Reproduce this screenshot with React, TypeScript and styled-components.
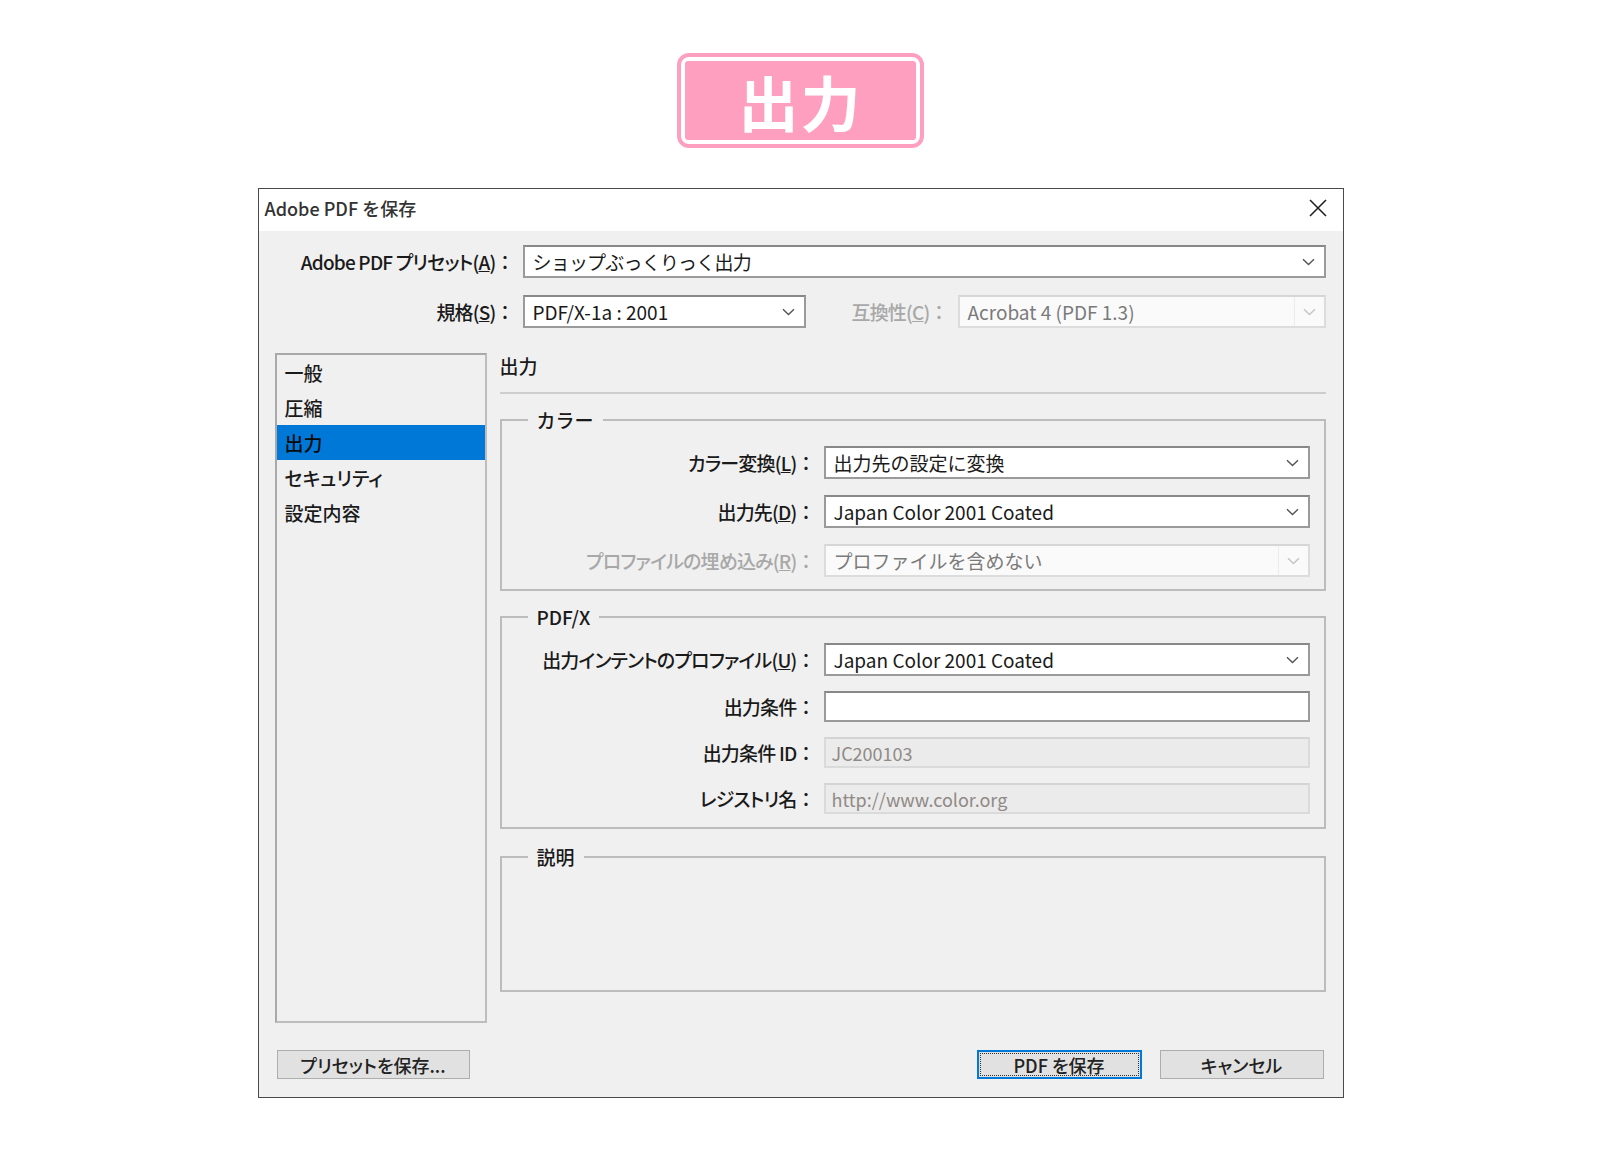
import React from "react";
import styled, { createGlobalStyle } from "styled-components";

const GlobalStyle = createGlobalStyle`
  html, body {
    margin: 0;
    padding: 0;
    background: #fff;
  }
  body {
    font-family: "Noto Sans CJK JP", "Noto Sans", sans-serif;
    font-weight: 500;
    color: #1a1a1a;
  }
  * {
    box-sizing: border-box;
  }
`;

const Page = styled.div`
  width: 1601px;
  min-height: 1150px;
  display: flex;
  flex-direction: column;
  align-items: center;
  padding-top: 53px;
`;

const Badge = styled.div`
  width: 247px;
  height: 95px;
  padding: 4px;
  display: flex;
  background: #fff;
  border: 4px solid #ff9fbf;
  border-radius: 12px;
`;

const BadgeInner = styled.div`
  flex: 1;
  display: flex;
  align-items: center;
  justify-content: center;
  background: #ff9fbf;
  border-radius: 3px;
  color: #fff;
  font-size: 60px;
  font-weight: 700;
  letter-spacing: 2px;
  line-height: 1;
`;

const Dialog = styled.div`
  margin-top: 40px;
  width: 1086px;
  display: flex;
  flex-direction: column;
  background: #f0f0f0;
  border: 1px solid #4a4a4a;
`;

const TitleBar = styled.div`
  height: 42px;
  display: flex;
  align-items: center;
  justify-content: space-between;
  padding: 0 16px 4px 6px;
  background: #fff;
  font-size: 18px;
  color: #333;
`;

const Body = styled.div`
  display: flex;
  flex-direction: column;
  padding: 14px 17px 18px 16px;
`;

const TopGrid = styled.div`
  display: grid;
  grid-template-columns: 240px 1fr;
  column-gap: 8px;
  row-gap: 17px;
  align-items: center;
`;

const Label = styled.div<{ $disabled?: boolean }>`
  text-align: right;
  font-size: 19px;
  white-space: nowrap;
  letter-spacing: -0.8px;
  font-feature-settings: "palt";
  color: ${(p) => (p.$disabled ? "#a8a8a8" : "#1a1a1a")};
`;

const Colon = styled.span`
  font-feature-settings: normal;
  letter-spacing: 0;
`;

const SubRow = styled.div`
  display: flex;
  align-items: center;
  gap: 9px;
`;

const Select = styled.div<{ $disabled?: boolean; $w?: number }>`
  height: 33px;
  ${(p) => (p.$w ? `width: ${p.$w}px; flex: none;` : "")}
  display: flex;
  align-items: center;
  padding-left: 8px;
  font-size: 19px;
  font-weight: 400;
  white-space: nowrap;
  overflow: hidden;
  background: ${(p) => (p.$disabled ? "#fafafa" : "#fff")};
  border: 2px solid ${(p) => (p.$disabled ? "#dcdcdc" : "#9a9a9a")};
  border-top-color: ${(p) => (p.$disabled ? "#d6d6d6" : "#888")};
  color: ${(p) => (p.$disabled ? "#7a7a7a" : "#1a1a1a")};
`;

const SelectValue = styled.span<{ $tight?: boolean }>`
  flex: 1;
  ${(p) => (p.$tight ? "letter-spacing: -0.8px;" : "")}
`;

const Chevron = styled.div<{ $disabled?: boolean }>`
  width: 30px;
  height: 100%;
  display: flex;
  align-items: center;
  justify-content: center;
  ${(p) => (p.$disabled ? "border-left: 1px solid #ebebeb;" : "")}
  color: ${(p) => (p.$disabled ? "#c4c4c4" : "#555")};
`;

const TextBox = styled.div<{ $disabled?: boolean }>`
  height: 31px;
  display: flex;
  align-items: center;
  padding-left: 6px;
  font-size: 18px;
  font-weight: 400;
  background: ${(p) => (p.$disabled ? "#ebebeb" : "#fff")};
  border: 2px solid ${(p) => (p.$disabled ? "#dadada" : "#9a9a9a")};
  border-top-color: ${(p) => (p.$disabled ? "#d4d4d4" : "#888")};
  color: ${(p) => (p.$disabled ? "#8f8a86" : "#1a1a1a")};
`;

const Main = styled.div`
  margin-top: 25px;
  height: 670px;
  display: flex;
  gap: 13px;
`;

const NavList = styled.div`
  width: 212px;
  flex: none;
  background: #f0f0f0;
  border: 2px solid #a9a9a9;
  border-right-color: #bdbdbd;
  border-bottom-color: #bdbdbd;
`;

const NavItem = styled.div<{ $active?: boolean }>`
  height: 35px;
  line-height: 35px;
  padding-left: 8px;
  font-size: 19px;
  font-feature-settings: "palt";
  color: ${(p) => (p.$active ? "#0a0a0a" : "#1a1a1a")};
  background: ${(p) => (p.$active ? "#0078d7" : "transparent")};
`;

const Panel = styled.div`
  flex: 1;
  display: flex;
  flex-direction: column;
  gap: 13px;
`;

const PanelHeader = styled.div`
  height: 41px;
  line-height: 26px;
  font-size: 19px;
  border-bottom: 2px solid #cdcdcd;
`;

const Group = styled.fieldset<{ $minH?: number; $padB?: number }>`
  margin: 0;
  min-width: 0;
  padding: 0 14px ${(p) => p.$padB ?? 12}px;
  border: 2px solid #bcbcbc;
  ${(p) => (p.$minH ? `min-height: ${p.$minH}px; margin-top: 2px;` : "")}
`;

const Legend = styled.legend`
  margin-left: 12px;
  padding: 0 9px;
  font-size: 19px;
  line-height: 26px;
`;

const GroupGrid = styled.div<{ $gap: number }>`
  margin-top: 13px;
  display: grid;
  grid-template-columns: 1fr 486px;
  column-gap: 8px;
  row-gap: ${(p) => p.$gap}px;
  align-items: center;
`;

const Footer = styled.div`
  margin-top: 27px;
  display: flex;
  align-items: center;
  padding: 0 2px;
`;

const Spacer = styled.div`
  flex: 1;
`;

const Button = styled.button<{ $w: number; $primary?: boolean }>`
  position: relative;
  width: ${(p) => p.$w}px;
  height: 29px;
  margin-left: ${(p) => (p.$primary ? 0 : 18)}px;
  padding: 0;
  font-family: inherit;
  font-weight: 500;
  font-size: 18px;
  font-feature-settings: "palt";
  color: #222;
  background: #e1e1e1;
  border: ${(p) => (p.$primary ? "2px solid #0078d7" : "1px solid #adadad")};
  &:first-child {
    margin-left: 0;
  }
  ${(p) =>
    p.$primary
      ? `&::after {
    content: "";
    position: absolute;
    inset: 1px;
    border: 1px dotted #333;
  }`
      : ""}
`;

function ChevronIcon() {
  return (
    <svg width="13" height="8" viewBox="0 0 13 8" fill="none">
      <path d="M1 1.2 L6.5 6.6 L12 1.2" stroke="currentColor" strokeWidth="1.4" />
    </svg>
  );
}

function CloseIcon() {
  return (
    <svg width="18" height="18" viewBox="0 0 18 18" fill="none">
      <path d="M1 1 L17 17 M17 1 L1 17" stroke="#222" strokeWidth="1.6" />
    </svg>
  );
}

interface SelectProps {
  value: string;
  disabled?: boolean;
  width?: number;
  tight?: boolean;
}
function ComboBox({ value, disabled, width, tight }: SelectProps) {
  return (
    <Select $disabled={disabled} $w={width}>
      <SelectValue $tight={tight}>{value}</SelectValue>
      <Chevron $disabled={disabled}>
        <ChevronIcon />
      </Chevron>
    </Select>
  );
}

const navItems = ["一般", "圧縮", "出力", "セキュリティ", "設定内容"];

export default function App() {
  return (
    <>
      <GlobalStyle />
      <Page>
        <Badge>
          <BadgeInner>出力</BadgeInner>
        </Badge>

        <Dialog>
          <TitleBar>
            <span>Adobe PDF を保存</span>
            <CloseIcon />
          </TitleBar>

          <Body>
            <TopGrid>
              <Label>
                Adobe PDF プリセット(<u>A</u>)<Colon>：</Colon>
              </Label>
              <ComboBox value="ショップぶっくりっく出力" tight />

              <Label>
                規格(<u>S</u>)<Colon>：</Colon>
              </Label>
              <SubRow>
                <ComboBox value="PDF/X-1a : 2001" width={283} />
                <Label $disabled style={{ flex: 1 }}>
                  互換性(<u>C</u>)<Colon>：</Colon>
                </Label>
                <ComboBox value="Acrobat 4 (PDF 1.3)" width={368} disabled />
              </SubRow>
            </TopGrid>

            <Main>
              <NavList>
                {navItems.map((item) => (
                  <NavItem key={item} $active={item === "出力"}>
                    {item}
                  </NavItem>
                ))}
              </NavList>

              <Panel>
                <PanelHeader>出力</PanelHeader>

                <Group>
                  <Legend>カラー</Legend>
                  <GroupGrid $gap={16}>
                    <Label>
                      カラー変換(<u>L</u>)<Colon>：</Colon>
                    </Label>
                    <ComboBox value="出力先の設定に変換" />
                    <Label>
                      出力先(<u>D</u>)<Colon>：</Colon>
                    </Label>
                    <ComboBox value="Japan Color 2001 Coated" />
                    <Label $disabled>
                      プロファイルの埋め込み(<u>R</u>)<Colon>：</Colon>
                    </Label>
                    <ComboBox value="プロファイルを含めない" disabled />
                  </GroupGrid>
                </Group>

                <Group $padB={13}>
                  <Legend>PDF/X</Legend>
                  <GroupGrid $gap={15}>
                    <Label>
                      出力インテントのプロファイル(<u>U</u>)<Colon>：</Colon>
                    </Label>
                    <ComboBox value="Japan Color 2001 Coated" />
                    <Label>
                      出力条件<Colon>：</Colon>
                    </Label>
                    <TextBox />
                    <Label>
                      出力条件 ID<Colon>：</Colon>
                    </Label>
                    <TextBox $disabled>JC200103</TextBox>
                    <Label>
                      レジストリ名<Colon>：</Colon>
                    </Label>
                    <TextBox $disabled>http://www.color.org</TextBox>
                  </GroupGrid>
                </Group>

                <Group $minH={148}>
                  <Legend>説明</Legend>
                </Group>
              </Panel>
            </Main>

            <Footer>
              <Button $w={193}>プリセットを保存...</Button>
              <Spacer />
              <Button $w={165} $primary>
                PDF を保存
              </Button>
              <Button $w={164}>キャンセル</Button>
            </Footer>
          </Body>
        </Dialog>
      </Page>
    </>
  );
}
